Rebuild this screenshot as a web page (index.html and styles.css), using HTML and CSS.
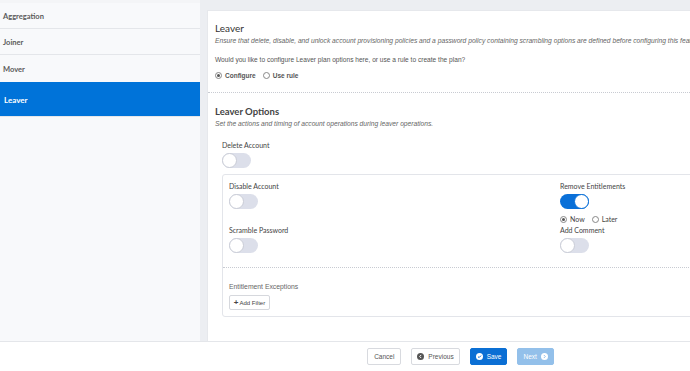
FILE: index.html
```html
<!DOCTYPE html>
<html lang="en">

<head>
  <meta charset="UTF-8">
  <meta name="viewport" content="width=device-width, initial-scale=1.0">
  <title>Lifecycle - Leaver</title>
  <link rel="stylesheet" href="styles.css">
</head>

<body>
  <div class="app">
    <div class="workspace">
      <!-- Lifecycle steps -->
      <ul class="steps">
        <li class="step">Aggregation</li>
        <li class="step">Joiner</li>
        <li class="step">Mover</li>
        <li class="step active">Leaver</li>
      </ul>

      <div class="gutter">
        <div class="panel">
          <div class="section intro">
            <h2>Leaver</h2>
            <p class="hint">Ensure that delete, disable, and unlock account provisioning policies and a password policy containing scrambling options are defined before configuring this feature.</p>
            <p class="question">Would you like to configure Leaver plan options here, or use a rule to create the plan?</p>
            <div class="radios">
              <label class="radio checked"><span class="dot"></span>Configure</label>
              <label class="radio"><span class="dot"></span>Use rule</label>
            </div>
          </div>

          <div class="section options">
            <h2>Leaver Options</h2>
            <p class="hint">Set the actions and timing of account operations during leaver operations.</p>

            <div class="field">
              <div class="label">Delete Account</div>
              <span class="toggle"></span>
            </div>

            <div class="box">
              <div class="grid">
                <div class="field">
                  <div class="label">Disable Account</div>
                  <span class="toggle"></span>
                </div>
                <div class="field">
                  <div class="label">Remove Entitlements</div>
                  <span class="toggle on"></span>
                  <div class="radios small">
                    <label class="radio checked"><span class="dot"></span>Now</label>
                    <label class="radio"><span class="dot"></span>Later</label>
                  </div>
                </div>
                <div class="field">
                  <div class="label">Scramble Password</div>
                  <span class="toggle"></span>
                </div>
                <div class="field">
                  <div class="label">Add Comment</div>
                  <span class="toggle"></span>
                </div>
              </div>

              <div class="exceptions">
                <div class="sub-label">Entitlement Exceptions</div>
                <button class="btn-filter"><span class="plus">+</span>Add Filter</button>
              </div>
            </div>
          </div>
        </div>
      </div>
    </div>

    <!-- Wizard buttons -->
    <div class="footer">
      <button class="btn">Cancel</button>
      <button class="btn">
        <svg class="ico" viewBox="0 0 10 10"><circle cx="5" cy="5" r="5" fill="#555"/><path d="M6 2.8 3.8 5 6 7.2" fill="none" stroke="#fff" stroke-width="1.4"/></svg>
        Previous
      </button>
      <button class="btn primary">
        <svg class="ico" viewBox="0 0 10 10"><circle cx="5" cy="5" r="5" fill="#fff"/><path d="M2.8 5.1 4.4 6.6 7.2 3.7" fill="none" stroke="#0b6fd4" stroke-width="1.4"/></svg>
        Save
      </button>
      <button class="btn disabled">
        Next
        <svg class="ico" viewBox="0 0 10 10"><circle cx="5" cy="5" r="5" fill="#fff"/><path d="M4 2.8 6.2 5 4 7.2" fill="none" stroke="#93c0ea" stroke-width="1.4"/></svg>
      </button>
    </div>
  </div>
</body>

</html>
```

FILE: styles.css
```css
* {
  margin: 0;
  padding: 0;
  box-sizing: border-box;
}

body {
  font-family: 'Liberation Sans', Arial, sans-serif;
  color: #444;
  background: #fff;
  overflow: hidden;
}

.app {
  display: flex;
  flex-direction: column;
  width: 690px;
  height: 100vh;
  overflow: hidden;
}

.workspace {
  flex: 1;
  display: flex;
  padding-top: 3px;
  background: #f4f5f7;
  min-height: 0;
}

/* Sidebar */
.steps {
  list-style: none;
  width: 200px;
  flex-shrink: 0;
  background: #f8f9fb;
}

.step {
  height: 26px;
  padding: 1px 0 0 3px;
  display: flex;
  align-items: center;
  font-family: Lato, sans-serif;
  font-size: 7.5px;
  font-weight: bold;
  color: #5a5a5a;
  border-bottom: 1px solid #e4e6ea;
}

.step:nth-child(3) {
  height: 27px;
  border-bottom: none;
}

.step.active {
  height: 35px;
  padding-left: 4px;
  background: #0073d9;
  color: #fff;
  font-size: 8px;
}

/* Main area */
.gutter {
  flex: 1;
  margin-top: -3px;
  padding: 10px 0 0 7px;
  background: #eceef2;
  overflow: hidden;
}

.panel {
  width: 707px;
  height: 100%;
  background: #fff;
  border-left: 1px solid #e6e8ec;
  border-top: 1px solid #e6e8ec;
}

.section {
  padding: 0 7px;
}

.section h2 {
  font-family: Lato, sans-serif;
  font-size: 10px;
  font-weight: normal;
  color: #333;
  line-height: 13px;
}

.intro {
  padding-top: 11px;
  height: 82px;
  border-bottom: 1px dotted #c8cbd2;
}

.options h2 {
  font-size: 9.5px;
  font-weight: bold;
  color: #444;
  margin-top: 12px;
}

.hint {
  font-size: 6.7px;
  font-style: italic;
  color: #666;
  white-space: nowrap;
  line-height: 10px;
  margin-top: 1px;
}

.question {
  font-size: 6.6px;
  color: #555;
  line-height: 10px;
  margin-top: 9px;
}

.radios {
  display: flex;
  gap: 7px;
  margin-top: 7px;
}

.radio {
  display: flex;
  align-items: center;
  gap: 3px;
  font-size: 6.5px;
  font-weight: bold;
  color: #555;
}

.dot {
  width: 7px;
  height: 7px;
  border: 1px solid #888;
  border-radius: 50%;
  background: #fff;
  position: relative;
}

.radio.checked .dot::after {
  content: "";
  position: absolute;
  left: 1px;
  top: 1px;
  width: 3px;
  height: 3px;
  border-radius: 50%;
  background: #555;
}

.field {
  display: flex;
  flex-direction: column;
  align-items: flex-start;
}

.options > .field {
  margin: 12px 0 0 7px;
}

.label {
  font-family: Lato, 'Open Sans', sans-serif;
  font-size: 7px;
  color: #444;
  line-height: 9px;
  margin-bottom: 3px;
}

.toggle {
  width: 29px;
  height: 15px;
  border-radius: 8px;
  background: #dcdfea;
  position: relative;
}

.toggle::after {
  content: "";
  position: absolute;
  left: 0;
  top: 0;
  width: 15px;
  height: 15px;
  border-radius: 50%;
  background: #fff;
  border: 1px solid #c9ccd6;
  box-sizing: border-box;
}

.toggle.on {
  background: #0a70d8;
}

.toggle.on::after {
  left: 14px;
  border-color: #0a70d8;
}

.radios.small {
  margin-top: 6px;
}

.radios.small .radio {
  font-family: Lato, 'Open Sans', sans-serif;
  font-weight: normal;
  font-size: 7px;
  color: #444;
}

.box {
  margin: 6px 7px 0 7px;
  border: 1px solid #e3e5ea;
  border-radius: 3px;
  height: 143px;
}

.grid {
  display: grid;
  grid-template-columns: 331px 1fr;
  align-content: start;
  row-gap: 3px;
  padding: 7px 6px 0 6px;
  height: 93px;
  border-bottom: 1px dotted #c8cbd2;
}

.exceptions {
  padding: 14px 6px 0 6px;
}

.sub-label {
  font-size: 6.8px;
  color: #666;
  line-height: 10px;
}

.btn-filter {
  margin-top: 3px;
  height: 15px;
  width: 41px;
  display: flex;
  align-items: center;
  justify-content: center;
  gap: 1px;
  font-family: inherit;
  font-size: 6px;
  color: #444;
  background: #fff;
  border: 1px solid #d6d8dd;
  border-radius: 2px;
}

.plus {
  font-weight: bold;
  font-size: 8px;
}

/* Footer */
.footer {
  height: 30px;
  flex-shrink: 0;
  border-top: 1px solid #e4e6ea;
  display: flex;
  align-items: center;
  justify-content: center;
  padding-left: 231px;
  gap: 10px;
}

.btn {
  height: 17px;
  padding: 0 5px;
  display: flex;
  align-items: center;
  gap: 4px;
  font-family: inherit;
  font-size: 6.5px;
  color: #555;
  background: #fff;
  border: 1px solid #d8dadf;
  border-radius: 2px;
}

.btn:first-child {
  padding: 0 6px;
}

.btn.primary {
  background: #0b6fd4;
  border-color: #0b6fd4;
  color: #fff;
}

.btn.disabled {
  background: #93c0ea;
  border-color: #93c0ea;
  color: #fff;
}

.ico {
  width: 7px;
  height: 7px;
}
```
